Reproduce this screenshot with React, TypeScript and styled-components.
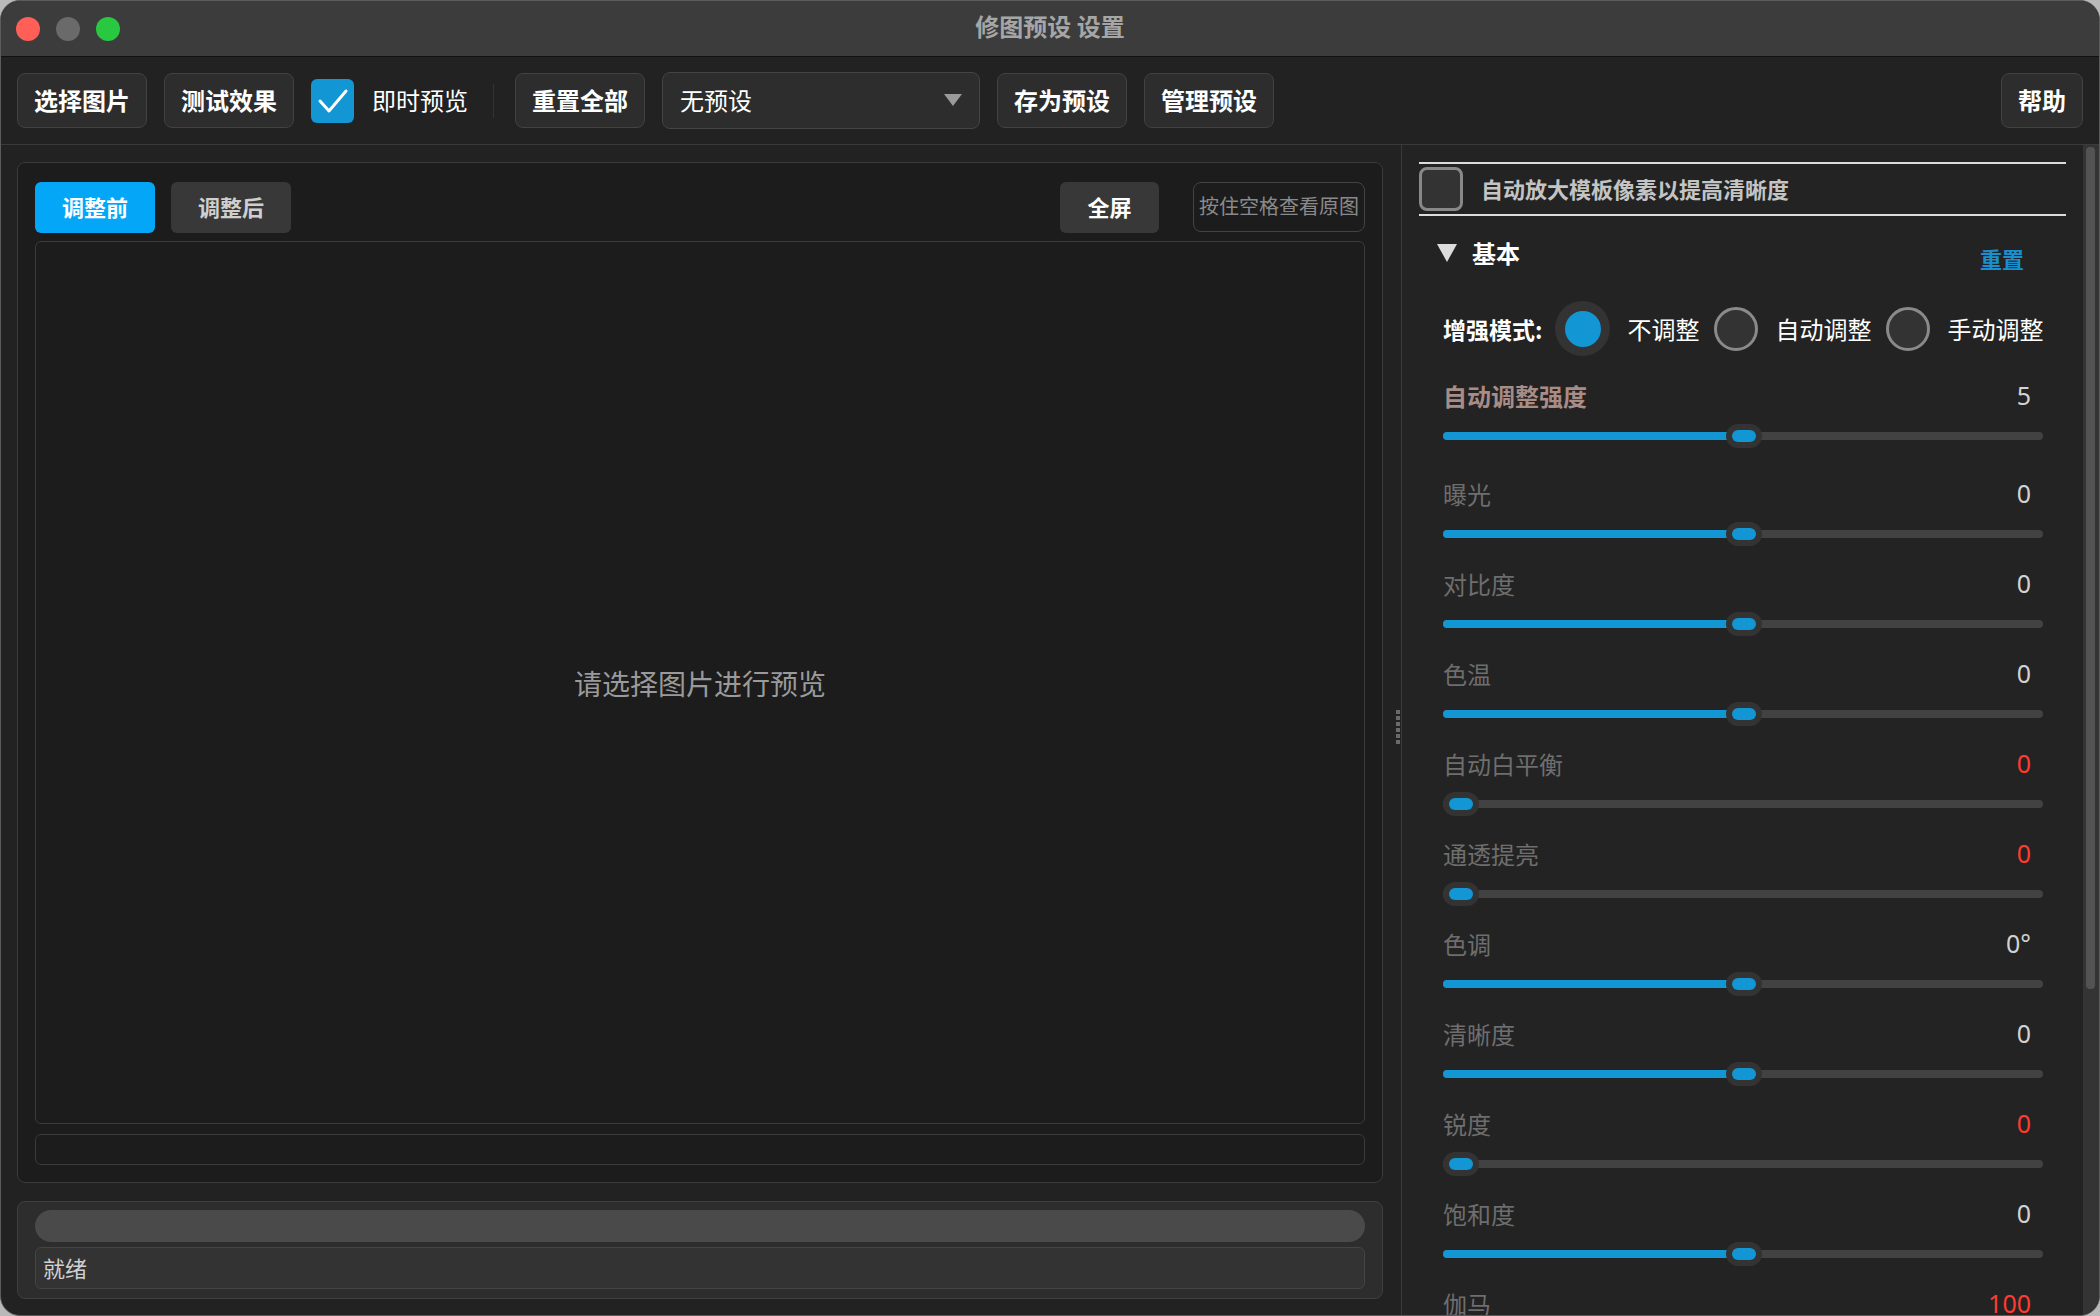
import React from 'react';
import styled, { createGlobalStyle } from 'styled-components';

type SliderItem = {
  label: string;
  value: string;
  pct: number;
  red?: boolean;
  strong?: boolean;
};

const SLIDERS: SliderItem[] = [
  { label: '自动调整强度', value: '5', pct: 0.5, strong: true },
  { label: '曝光', value: '0', pct: 0.5 },
  { label: '对比度', value: '0', pct: 0.5 },
  { label: '色温', value: '0', pct: 0.5 },
  { label: '自动白平衡', value: '0', pct: 0, red: true },
  { label: '通透提亮', value: '0', pct: 0, red: true },
  { label: '色调', value: '0°', pct: 0.5 },
  { label: '清晰度', value: '0', pct: 0.5 },
  { label: '锐度', value: '0', pct: 0, red: true },
  { label: '饱和度', value: '0', pct: 0.5 },
  { label: '伽马', value: '100', pct: 0.5, red: true },
];

const TRACK_WIDTH = 602;
const THUMB_WIDTH = 36;

function Slider({ item, first }: { item: SliderItem; first: boolean }) {
  const left = item.pct * (TRACK_WIDTH - THUMB_WIDTH);
  return (
    <StyledSliderRow $first={first}>
      <StyledSliderHead>
        <StyledSliderLabel $strong={item.strong}>{item.label}</StyledSliderLabel>
        <StyledSliderValue $red={item.red}>{item.value}</StyledSliderValue>
      </StyledSliderHead>
      <StyledTrackWrap>
        <StyledTrack />
        <StyledFill style={{ width: left + THUMB_WIDTH / 2 }} />
        <StyledThumb style={{ left }}>
          <StyledThumbDot />
        </StyledThumb>
      </StyledTrackWrap>
    </StyledSliderRow>
  );
}

function App() {
  return (
    <>
      <GlobalStyle />
      <StyledWindow>
        <StyledTitleBar>
          <StyledLights>
            <StyledLight $color="#ff5f57" />
            <StyledLight $color="#6a6a6a" />
            <StyledLight $color="#28c840" />
          </StyledLights>
          <StyledTitle>修图预设 设置</StyledTitle>
          <div />
        </StyledTitleBar>

        <StyledToolbar>
          <StyledToolButton>选择图片</StyledToolButton>
          <StyledToolButton>测试效果</StyledToolButton>
          <StyledCheck>
            <svg width="34" height="30" viewBox="0 0 34 30">
              <polyline points="4,15 13,25 30,5" fill="none" stroke="#fff" strokeWidth="3" strokeLinecap="round" strokeLinejoin="round" />
            </svg>
          </StyledCheck>
          <StyledCheckLabel>即时预览</StyledCheckLabel>
          <StyledSeparator />
          <StyledToolButton>重置全部</StyledToolButton>
          <StyledSelect>
            <span>无预设</span>
            <svg width="20" height="14" viewBox="0 0 20 14">
              <polygon points="1,1 19,1 10,13" fill="#9a9a9a" />
            </svg>
          </StyledSelect>
          <StyledToolButton>存为预设</StyledToolButton>
          <StyledToolButton>管理预设</StyledToolButton>
          <StyledSpacer />
          <StyledToolButton>帮助</StyledToolButton>
        </StyledToolbar>

        <StyledBody>
          <StyledLeftColumn>
            <StyledMainPanel>
              <StyledTabRow>
                <StyledTab $active>调整前</StyledTab>
                <StyledTab>调整后</StyledTab>
                <StyledSpacer />
                <StyledFullButton>全屏</StyledFullButton>
                <StyledHint>按住空格查看原图</StyledHint>
              </StyledTabRow>
              <StyledPreview>请选择图片进行预览</StyledPreview>
              <StyledSubBox />
            </StyledMainPanel>
            <StyledStatusPanel>
              <StyledProgress />
              <StyledStatusText>就绪</StyledStatusText>
            </StyledStatusPanel>
          </StyledLeftColumn>

          <StyledSplitter>
            <StyledGrip>
              {Array.from({ length: 6 }).map((_, i) => (
                <StyledGripDot key={i} />
              ))}
            </StyledGrip>
          </StyledSplitter>

          <StyledRightPanel>
            <StyledOptionRow>
              <StyledOptionBox />
              <StyledOptionText>自动放大模板像素以提高清晰度</StyledOptionText>
            </StyledOptionRow>

            <StyledSectionHead>
              <svg width="20" height="18" viewBox="0 0 20 18">
                <polygon points="0,0 20,0 10,18" fill="#dcdcdc" />
              </svg>
              <StyledSectionTitle>基本</StyledSectionTitle>
              <StyledSpacer />
              <StyledResetLink>重置</StyledResetLink>
            </StyledSectionHead>

            <StyledModeRow>
              <StyledModeLabel>增强模式:</StyledModeLabel>
              <StyledRadioItem>
                <StyledRadioOn>
                  <StyledRadioDot />
                </StyledRadioOn>
                <StyledRadioText>不调整</StyledRadioText>
              </StyledRadioItem>
              <StyledRadioItem>
                <StyledRadioOff />
                <StyledRadioText>自动调整</StyledRadioText>
              </StyledRadioItem>
              <StyledRadioItem>
                <StyledRadioOff />
                <StyledRadioText>手动调整</StyledRadioText>
              </StyledRadioItem>
            </StyledModeRow>

            <StyledSliderList>
              {SLIDERS.map((item, i) => (
                <Slider key={item.label} item={item} first={i === 0} />
              ))}
            </StyledSliderList>
          </StyledRightPanel>

          <StyledScrollbar>
            <StyledScrollThumb />
          </StyledScrollbar>
        </StyledBody>
      </StyledWindow>
    </>
  );
}

const GlobalStyle = createGlobalStyle`
  html, body {
    margin: 0;
    padding: 0;
    background: #b9b9b9;
  }

  body {
    font-family: "Noto Sans CJK SC", "Noto Sans", sans-serif;
  }

  * {
    box-sizing: border-box;
  }
`;

const StyledWindow = styled.div`
  display: flex;
  flex-direction: column;
  width: 2100px;
  height: 1316px;
  border: 1px solid #5c5c5c;
  border-radius: 20px;
  overflow: hidden;
  background: #222222;
`;

const StyledTitleBar = styled.div`
  display: grid;
  grid-template-columns: 1fr auto 1fr;
  align-items: center;
  flex: 0 0 56px;
  height: 56px;
  background: #3c3c3c;
  border-bottom: 1px solid #111111;
`;

const StyledLights = styled.div`
  display: flex;
  gap: 16px;
  padding-left: 15px;
`;

const StyledLight = styled.span<{ $color: string }>`
  width: 24px;
  height: 24px;
  border-radius: 50%;
  background: ${({ $color }) => $color};
`;

const StyledTitle = styled.div`
  margin-top: -5px;
  font-size: 24px;
  font-weight: bold;
  color: #a6a6a6;
  line-height: 1;
`;

const StyledToolbar = styled.div`
  display: flex;
  align-items: center;
  gap: 17px;
  flex: 0 0 88px;
  height: 88px;
  padding: 0 16px;
  border-bottom: 1px solid #3a3a3a;
`;

const StyledToolButton = styled.button`
  height: 55px;
  padding: 0 16px 2px;
  border: 1px solid #424242;
  border-radius: 8px;
  background: #2d2d2d;
  color: #ffffff;
  font-family: "Noto Sans CJK SC", sans-serif;
  font-size: 24px;
  font-weight: bold;
  line-height: 1;
`;

const StyledCheck = styled.div`
  display: flex;
  align-items: center;
  justify-content: center;
  width: 43px;
  height: 44px;
  border-radius: 6px;
  background: #1296d4;
`;

const StyledCheckLabel = styled.span`
  margin: -2px 0 0 1px;
  color: #ffffff;
  font-size: 24px;
`;

const StyledSeparator = styled.div`
  width: 1px;
  height: 34px;
  margin: 0 4px 0 8px;
  background: #333333;
`;

const StyledSelect = styled.div`
  display: flex;
  align-items: center;
  justify-content: space-between;
  width: 318px;
  height: 57px;
  padding: 0 16px 2px 17px;
  border: 1px solid #444444;
  border-radius: 8px;
  background: #2d2d2d;
  color: #ffffff;
  font-size: 24px;
`;

const StyledSpacer = styled.div`
  flex: 1;
`;

const StyledBody = styled.div`
  display: flex;
  flex: 1;
  min-height: 0;
`;

const StyledLeftColumn = styled.div`
  display: flex;
  flex-direction: column;
  gap: 18px;
  width: 1395px;
  padding: 17px 13px 16px 16px;
`;

const StyledMainPanel = styled.div`
  display: flex;
  flex-direction: column;
  flex: 1;
  padding: 19px 17px 17px;
  border: 1px solid #3a3a3a;
  border-radius: 8px;
  background: #1c1c1c;
`;

const StyledTabRow = styled.div`
  display: flex;
  align-items: center;
  gap: 16px;
  height: 51px;
`;

const StyledTab = styled.div<{ $active?: boolean }>`
  display: flex;
  align-items: center;
  justify-content: center;
  width: 120px;
  height: 51px;
  padding-bottom: 3px;
  border-radius: 6px;
  background: ${({ $active }) => ($active ? '#04a6f7' : '#383838')};
  color: ${({ $active }) => ($active ? '#ffffff' : '#cfcfcf')};
  font-size: 22px;
  font-weight: bold;
`;

const StyledFullButton = styled.div`
  display: flex;
  align-items: center;
  justify-content: center;
  width: 99px;
  height: 51px;
  margin-right: 18px;
  padding-bottom: 3px;
  border-radius: 6px;
  background: #383838;
  color: #ffffff;
  font-size: 22px;
  font-weight: bold;
`;

const StyledHint = styled.div`
  display: flex;
  align-items: center;
  justify-content: center;
  width: 172px;
  height: 50px;
  margin-top: -2px;
  padding-bottom: 3px;
  border: 1px solid #444444;
  border-radius: 8px;
  color: #8a8a8a;
  font-size: 20px;
  white-space: nowrap;
`;

const StyledPreview = styled.div`
  display: flex;
  align-items: center;
  justify-content: center;
  flex: 1;
  margin-top: 8px;
  border: 1px solid #3a3a3a;
  border-radius: 6px;
  color: #9a9a9a;
  font-size: 28px;
`;

const StyledSubBox = styled.div`
  height: 31px;
  margin-top: 10px;
  border: 1px solid #3a3a3a;
  border-radius: 6px;
`;

const StyledStatusPanel = styled.div`
  display: flex;
  flex-direction: column;
  gap: 5px;
  height: 98px;
  padding: 8px 17px;
  border: 1px solid #3e3e3e;
  border-radius: 8px;
  background: #2d2d2d;
`;

const StyledProgress = styled.div`
  height: 32px;
  border-radius: 16px;
  background: #4a4a4a;
`;

const StyledStatusText = styled.div`
  display: flex;
  align-items: center;
  height: 42px;
  padding: 0 0 3px 7px;
  border: 1px solid #444444;
  border-radius: 6px;
  background: #333333;
  color: #d0d0d0;
  font-size: 22px;
`;

const StyledSplitter = styled.div`
  display: flex;
  align-items: center;
  width: 6px;
  border-right: 1px solid #3a3a3a;
`;

const StyledGrip = styled.div`
  display: flex;
  flex-direction: column;
  gap: 2px;
  margin-top: -6px;
`;

const StyledGripDot = styled.span`
  width: 4px;
  height: 4px;
  background: #6a6a6a;
`;

const StyledRightPanel = styled.div`
  display: flex;
  flex-direction: column;
  flex: 1;
  min-width: 0;
  padding: 17px 17px 0;
  overflow: hidden;
  background: #232323;
`;

const StyledOptionRow = styled.div`
  display: flex;
  align-items: center;
  gap: 18px;
  height: 54px;
  flex-shrink: 0;
  border-top: 2px solid #dcdcdc;
  border-bottom: 2px solid #dcdcdc;
`;

const StyledOptionBox = styled.div`
  width: 44px;
  height: 44px;
  border: 3px solid #888888;
  border-radius: 8px;
  background: #333333;
`;

const StyledOptionText = styled.span`
  margin-top: -3px;
  color: #c4c4c4;
  font-size: 22px;
  font-weight: bold;
`;

const StyledSectionHead = styled.div`
  display: flex;
  align-items: center;
  height: 36px;
  flex-shrink: 0;
  margin-top: 19px;
  padding: 0 42px 0 18px;
`;

const StyledSectionTitle = styled.span`
  margin: -2px 0 0 15px;
  color: #ffffff;
  font-size: 24px;
  font-weight: bold;
`;

const StyledResetLink = styled.span`
  margin-top: 10px;
  color: #1a8fd0;
  font-size: 22px;
  font-weight: bold;
`;

const StyledModeRow = styled.div`
  display: flex;
  align-items: center;
  gap: 15px;
  height: 55px;
  flex-shrink: 0;
  margin-top: 30px;
  padding-left: 24px;
`;

const StyledModeLabel = styled.span`
  margin-right: -2px;
  color: #ffffff;
  font-size: 23px;
  font-weight: bold;
`;

const StyledRadioItem = styled.div`
  display: flex;
  align-items: center;
  gap: 17px;
`;

const StyledRadioOn = styled.div`
  display: flex;
  align-items: center;
  justify-content: center;
  width: 55px;
  height: 55px;
  border-radius: 50%;
  background: #333333;
`;

const StyledRadioDot = styled.span`
  width: 36px;
  height: 36px;
  border-radius: 50%;
  background: #1296d4;
`;

const StyledRadioOff = styled.div`
  width: 44px;
  height: 44px;
  border: 3px solid #8a8a8a;
  border-radius: 50%;
  background: #333333;
`;

const StyledRadioText = styled.span`
  color: #ffffff;
  font-size: 24px;
`;

const StyledSliderList = styled.div`
  display: flex;
  flex-direction: column;
  flex-shrink: 0;
  margin-top: 22px;
  padding: 0 23px 0 24px;
`;

const StyledSliderRow = styled.div<{ $first: boolean }>`
  display: flex;
  flex-direction: column;
  height: ${({ $first }) => ($first ? 98 : 90)}px;
  flex-shrink: 0;
`;

const StyledSliderHead = styled.div`
  display: flex;
  align-items: center;
  justify-content: space-between;
  height: 34px;
  padding-right: 12px;
`;

const StyledSliderLabel = styled.span<{ $strong?: boolean }>`
  color: ${({ $strong }) => ($strong ? '#a88c86' : '#6e6e6e')};
  font-size: 24px;
  font-weight: ${({ $strong }) => ($strong ? 'bold' : 'normal')};
`;

const StyledSliderValue = styled.span<{ $red?: boolean }>`
  color: ${({ $red }) => ($red ? '#ff3b30' : '#d2d2d2')};
  font-family: "Noto Sans", sans-serif;
  font-size: 25px;
`;

const StyledTrackWrap = styled.div`
  position: relative;
  height: 24px;
  margin-top: 12px;
`;

const StyledTrack = styled.div`
  position: absolute;
  left: 0;
  right: 0;
  top: 8px;
  height: 8px;
  border-radius: 4px;
  background: #424242;
`;

const StyledFill = styled.div`
  position: absolute;
  left: 0;
  top: 8px;
  height: 8px;
  border-radius: 4px;
  background: #1296d4;
`;

const StyledThumb = styled.div`
  position: absolute;
  top: 0;
  display: flex;
  align-items: center;
  justify-content: center;
  width: 36px;
  height: 24px;
  border-radius: 12px;
  background: #333333;
`;

const StyledThumbDot = styled.span`
  width: 24px;
  height: 12px;
  border-radius: 6px;
  background: #1296d4;
`;

const StyledScrollbar = styled.div`
  width: 16px;
  padding: 2px 4px 0 3px;
  background: #343434;
`;

const StyledScrollThumb = styled.div`
  height: 842px;
  border-radius: 4px;
  background: #535353;
`;

export default App;
